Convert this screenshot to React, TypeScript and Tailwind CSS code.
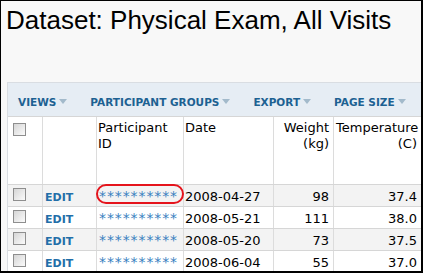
import React from 'react';

const rows = [
  { date: '2008-04-27', weight: '98', temp: '37.4', shade: true, circled: true },
  { date: '2008-05-21', weight: '111', temp: '38.0', shade: false, circled: false },
  { date: '2008-05-20', weight: '73', temp: '37.5', shade: true, circled: false },
  { date: '2008-06-04', weight: '55', temp: '37.0', shade: false, circled: false },
];

function Caret() {
  return (
    <svg width="8" height="5" viewBox="0 0 8 5" className="ml-[3px] mt-[5px] shrink-0">
      <polygon points="0,0 8,0 4,5" fill="#a3bacb" />
    </svg>
  );
}

function Checkbox() {
  return (
    <div className="w-[13px] h-[13px] border border-[#8e8e8e] bg-gradient-to-br from-[#d6d6d6] to-[#fbfbfb]" />
  );
}

const menu = ['Views', 'Participant Groups', 'Export', 'Page Size'];

export default function App() {
  return (
    <div
      className="w-[423px] h-[273px] overflow-hidden bg-[#f8f8f8] border-t border-l border-r-2 border-b-2 border-black"
      style={{ fontFamily: '"DejaVu Sans", Verdana, sans-serif' }}
    >
      <h1
        className="pl-[5px] pt-[4px] text-[26px] leading-[30px] text-black whitespace-nowrap"
        style={{ fontFamily: '"Liberation Sans", Arial, sans-serif' }}
      >
        Dataset: Physical Exam, All Visits
      </h1>

      <div className="ml-[6px] mt-[47px] w-[440px] border-l border-t border-[#d9dde2] bg-white">
        {/* button bar */}
        <div className="h-[34px] flex items-start pt-[11px] pl-[10px] gap-[23px] bg-[#e6edf4] border-b border-[#d6d6d6]">
          {menu.map((m) => (
            <div key={m} className="flex items-start">
              <span className="text-[10.5px] leading-[16px] font-bold uppercase text-[#1d6192] whitespace-nowrap">
                {m}
              </span>
              <Caret />
            </div>
          ))}
        </div>

        {/* header row */}
        <div className="flex h-[68px] border-b border-[#d6d6d6] text-[13px] leading-[16px] text-black">
          <div className="w-[35px] shrink-0 border-r border-[#dcdcdc] pl-[5px] pt-[6px]">
            <Checkbox />
          </div>
          <div className="w-[54px] shrink-0 border-r border-[#dcdcdc]" />
          <div className="w-[87px] shrink-0 border-r border-[#dcdcdc] pl-px pt-[3px]">
            Participant
            <br />
            ID
          </div>
          <div className="w-[90px] shrink-0 border-r border-[#dcdcdc] pl-px pt-[3px]">Date</div>
          <div className="w-[60px] shrink-0 border-r border-[#dcdcdc] pr-[4px] pt-[3px] text-right">
            Weight
            <br />
            (kg)
          </div>
          <div className="w-[90px] shrink-0 pl-[2px] pt-[3px]">
            <div className="w-[81px] text-right">
              <div className="text-left">Temperature</div>
              (C)
            </div>
          </div>
        </div>

        {/* data rows */}
        {rows.map((r, i) => (
          <div
            key={i}
            className={`flex h-[22px] border-b border-[#d6d6d6] text-[13px] leading-[16px] text-black ${
              r.shade ? 'bg-[#f3f3f3]' : 'bg-white'
            }`}
          >
            <div className="w-[35px] shrink-0 border-r border-[#dcdcdc] pl-[5px] pt-[3px]">
              <Checkbox />
            </div>
            <div className="w-[54px] shrink-0 border-r border-[#dcdcdc] pl-[2px] pt-[4px]">
              <span className="text-[11px] font-bold text-[#226ea8]">EDIT</span>
            </div>
            <div className="relative w-[87px] shrink-0 border-r border-[#dcdcdc] pl-[2px] pt-[3px]">
              <span className="text-[14px] text-[#3a7fbf] tracking-[0.9px]">**********</span>
              {r.circled && (
                <div className="absolute -left-px -top-px w-[88px] h-[20px] border-2 border-[#e5141c] rounded-full" />
              )}
            </div>
            <div className="w-[90px] shrink-0 border-r border-[#dcdcdc] pl-px pt-[4px]">{r.date}</div>
            <div className="w-[60px] shrink-0 border-r border-[#dcdcdc] pr-[4px] pt-[4px] text-right">
              {r.weight}
            </div>
            <div className="w-[90px] shrink-0 pt-[4px]">
              <div className="w-[83px] text-right">{r.temp}</div>
            </div>
          </div>
        ))}
      </div>
    </div>
  );
}
